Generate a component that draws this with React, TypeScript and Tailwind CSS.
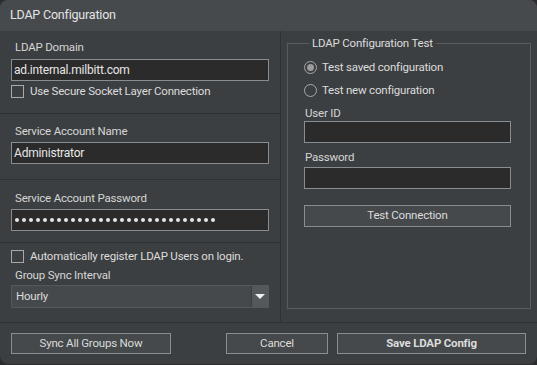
import { ReactNode } from 'react';

const FONT = { fontFamily: 'Roboto, "Noto Sans", sans-serif' };
const TXT = 'text-[11.5px] tracking-[-0.2px]';

function TextBox({ value, className = '' }: { value?: ReactNode; className?: string }) {
  return (
    <div
      className={`h-[22px] border border-[#8a8d90] bg-[#2b2b2b] pl-[2px] flex items-center text-[12px] tracking-[-0.2px] text-[#e6e6e6] whitespace-nowrap overflow-hidden ${className}`}
    >
      {value}
    </div>
  );
}

function Check({ label, className = '' }: { label: string; className?: string }) {
  return (
    <div className={`flex items-center gap-[6px] ${className}`}>
      <span className="w-[13px] h-[13px] border border-[#a7a9ab] bg-[#3c3f41] shrink-0" />
      <span className={`${TXT} leading-[14px] text-[#dcdcdc] whitespace-nowrap`}>{label}</span>
    </div>
  );
}

function Radio({ label, checked }: { label: string; checked?: boolean }) {
  return (
    <div className="flex items-center gap-[5px]">
      <span className="w-[13px] h-[13px] rounded-full border border-[#a7a9ab] flex items-center justify-center shrink-0">
        {checked && <span className="w-[7px] h-[7px] rounded-full bg-[#9a9c9e]" />}
      </span>
      <span className={`${TXT} leading-[14px] text-[#dcdcdc]`}>{label}</span>
    </div>
  );
}

function Label({ children, className = '' }: { children: ReactNode; className?: string }) {
  return <p className={`${TXT} leading-[16px] text-[#d6d6d6] ${className}`}>{children}</p>;
}

function Button({ children, className = '', bold }: { children: ReactNode; className?: string; bold?: boolean }) {
  return (
    <button
      className={`h-[21px] border border-[#8a8d90] bg-[#45494b] ${TXT} text-[#dcdcdc] flex items-center justify-center ${bold ? 'font-bold' : ''} ${className}`}
    >
      {children}
    </button>
  );
}

export default function App() {
  const dots = Array.from({ length: 29 });

  return (
    <div className="w-[537px] h-[365px] bg-[#2b2c2e]" style={FONT}>
      <div className="w-[537px] h-[364px] rounded-[8px] overflow-hidden bg-[#3c3f41] flex flex-col">
        {/* title bar */}
        <div className="h-[31px] bg-[#474a4d] flex items-center pl-[10px] text-[12.5px] tracking-[-0.2px] text-[#e4e4e4] shrink-0">
          LDAP Configuration
        </div>

        <div className="flex h-[291px]">
          {/* left column */}
          <div className="w-[281px] border-r border-[#2f3133] flex flex-col">
            <div className="h-[83px] border-b border-[#2f3133] px-[11px] pt-[8px]">
              <Label className="pl-[4px]">LDAP Domain</Label>
              <TextBox className="mt-[4px]" value="ad.internal.milbitt.com" />
              <Check className="mt-[3px]" label="Use Secure Socket Layer Connection" />
            </div>
            <div className="h-[66px] border-b border-[#2f3133] px-[11px] pt-[9px]">
              <Label className="pl-[4px]">Service Account Name</Label>
              <TextBox className="mt-[3px]" value="Administrator" />
            </div>
            <div className="h-[63px] border-b border-[#2f3133] px-[11px] pt-[10px]">
              <Label className="pl-[4px]">Service Account Password</Label>
              <TextBox
                className="mt-[3px]"
                value={
                  <span className="flex gap-[3px] pl-[1px]">
                    {dots.map((_, i) => (
                      <span key={i} className="w-[4px] h-[4px] rounded-full bg-[#e6e6e6]" />
                    ))}
                  </span>
                }
              />
            </div>
            <div className="flex-1 px-[11px] pt-[6px]">
              <Check label="Automatically register LDAP Users on login." />
              <Label className="pl-[4px] mt-[4px]">Group Sync Interval</Label>
              <div className="mt-[2px] h-[23px] border border-[#55585b] bg-[#45494b] flex">
                <span className={`flex-1 flex items-center pl-[4px] ${TXT} text-[#dcdcdc]`}>Hourly</span>
                <span className="w-[17px] border-l border-[#3c3f41] bg-[#55585a] flex items-center justify-center">
                  <svg width="10" height="6" viewBox="0 0 10 6">
                    <path d="M0 0h10L5 5z" fill="#f0f0f0" />
                  </svg>
                </span>
              </div>
            </div>
          </div>

          {/* right column */}
          <div className="flex-1 pl-[6px] pr-[6px] pt-[5px]">
            <fieldset className="h-[273px] border border-[#5a5d60] px-[16px] pt-[10px]">
              <legend className={`ml-[5px] px-[3px] ${TXT} leading-[14px] text-[#dcdcdc]`}>
                LDAP Configuration Test
              </legend>
              <div className="flex flex-col gap-[9px]">
                <Radio label="Test saved configuration" checked />
                <Radio label="Test new configuration" />
              </div>
              <Label className="mt-[8px] pl-[1px]">User ID</Label>
              <TextBox className="w-[207px] mt-[0px]" />
              <Label className="mt-[6px] pl-[1px]">Password</Label>
              <TextBox className="w-[207px] mt-[2px]" />
              <Button className="w-[207px] mt-[16px] h-[22px]">Test Connection</Button>
            </fieldset>
          </div>
        </div>

        {/* footer */}
        <div className="flex-1 border-t border-[#2f3133] flex items-start pt-[10px] px-[11px]">
          <Button className="w-[160px]">Sync All Groups Now</Button>
          <Button className="w-[102px] ml-[55px]">Cancel</Button>
          <Button className="w-[189px] ml-[9px]" bold>
            Save LDAP Config
          </Button>
        </div>
      </div>
    </div>
  );
}
